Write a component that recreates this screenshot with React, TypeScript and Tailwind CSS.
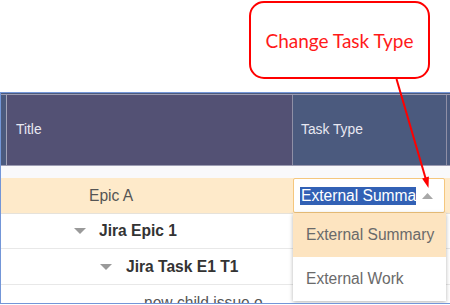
import React from "react";

function Tri({ className = "" }: { className?: string }) {
  return (
    <svg width="12" height="6" viewBox="0 0 12 6" className={className}>
      <polygon points="0,0 12,0 6,6" fill="#9a9a9a" />
    </svg>
  );
}

export default function App() {
  return (
    <div
      className="relative w-[450px] h-[305px] overflow-hidden bg-white"
      style={{ fontFamily: '"Liberation Sans", Arial, sans-serif' }}
    >
      {/* annotation area */}
      <div className="h-[92px] pt-[1px] pl-[249px]">
        <div
          className="w-[181px] h-[78px] rounded-[15px] border-2 border-[#ff0000] flex items-center justify-center text-[#ff1a1a] text-[19px] leading-none"
          style={{ fontFamily: 'Lato, "Open Sans", sans-serif' }}
        >
          Change Task Type
        </div>
      </div>

      {/* grid */}
      <div className="h-[212px] border-t border-l border-b border-[#7396d8] flex flex-col overflow-hidden">
        {/* header */}
        <div className="h-[73px] pt-px bg-[#4b5a7e] shrink-0">
          <div className="h-full flex border-t border-b border-[#9c9cb2]">
            <div className="w-[6px] border-r border-[#a3a3b8] bg-[#4b5a7e]" />
            <div className="w-[286px] border-r border-[#8f8fa6] bg-[#535174] flex items-center pl-[9px] text-[13.8px] text-[#e8e8f2]">
              Title
            </div>
            <div className="w-[154px] border-r border-[#8f8fa6] bg-[#4b5a7e] flex items-center pl-[8px] text-[13.8px] text-[#e8e8f2]">
              Task Type
            </div>
            <div className="flex-1 bg-[#4b5a7e]" />
          </div>
        </div>

        {/* body */}
        <div className="flex-1 min-h-0 flex flex-col text-[15.6px] relative">
          {/* partially scrolled-out row */}
          <div className="h-[12px] overflow-hidden bg-[#f9f9fb] shrink-0">
            <div className="-mt-[26px] h-[36px] flex items-center">
              <div className="w-[71px]" />
              <div className="w-[222px] font-bold text-[#333]">Strategy</div>
              <div className="pl-[9px] text-[#555]">Summary</div>
            </div>
          </div>

          {/* Epic A */}
          <div className="h-[36px] flex bg-[#feeaca] border-b border-[#e6e2da] shrink-0">
            <div className="w-[292px] flex items-center pl-[88px] text-[#555]">Epic A</div>
            <div className="w-[152px] h-[35px] bg-white border border-[#f5c77e] rounded-[2px] flex items-center pl-[6px]">
              <div className="w-[116px] overflow-hidden whitespace-nowrap">
                <span className="bg-[#3261b5] text-white leading-[18px] inline-block pl-[1px]">
                  External Summary
                </span>
              </div>
              <svg width="11" height="6" viewBox="0 0 11 6" className="ml-[6px]">
                <polygon points="0,6 11,6 5.5,0" fill="#a8a8a8" />
              </svg>
            </div>
          </div>

          {/* Jira Epic 1 */}
          <div className="h-[35px] flex border-b border-[#e8e8e8] shrink-0">
            <div className="w-[292px] flex items-center pl-[73px]">
              <Tri />
              <span className="ml-[13px] font-bold text-[#333]">Jira Epic 1</span>
            </div>
          </div>

          {/* Jira Task E1 T1 */}
          <div className="h-[36px] flex border-b border-[#e8e8e8] shrink-0">
            <div className="w-[292px] flex items-center pl-[99px]">
              <Tri />
              <span className="ml-[14px] font-bold text-[#333]">Jira Task E1 T1</span>
            </div>
          </div>

          {/* new child */}
          <div className="h-[36px] flex shrink-0">
            <div className="w-[292px] flex items-center pl-[143px] text-[#555] whitespace-nowrap overflow-hidden">
              new child issue o
            </div>
          </div>

          {/* dropdown list */}
          <div className="absolute left-[292px] top-[47px] w-[153px] bg-white shadow-[0_1px_4px_rgba(0,0,0,0.3)] text-[15.6px] text-[#6a6a6a]">
            <div className="h-[44px] bg-[#fde4c0] flex items-center pl-[13px]">External Summary</div>
            <div className="h-[44px] flex items-center pl-[13px]">External Work</div>
          </div>
        </div>
      </div>

      {/* arrow */}
      <svg
        className="absolute left-0 top-0 pointer-events-none"
        width="450"
        height="305"
        viewBox="0 0 450 305"
      >
        <line x1="396.5" y1="79" x2="425.5" y2="178" stroke="#ff0000" strokeWidth="2" />
        <polygon points="428.5,188 428.9,176.4 422.1,178.4" fill="#ff0000" />
      </svg>
    </div>
  );
}
